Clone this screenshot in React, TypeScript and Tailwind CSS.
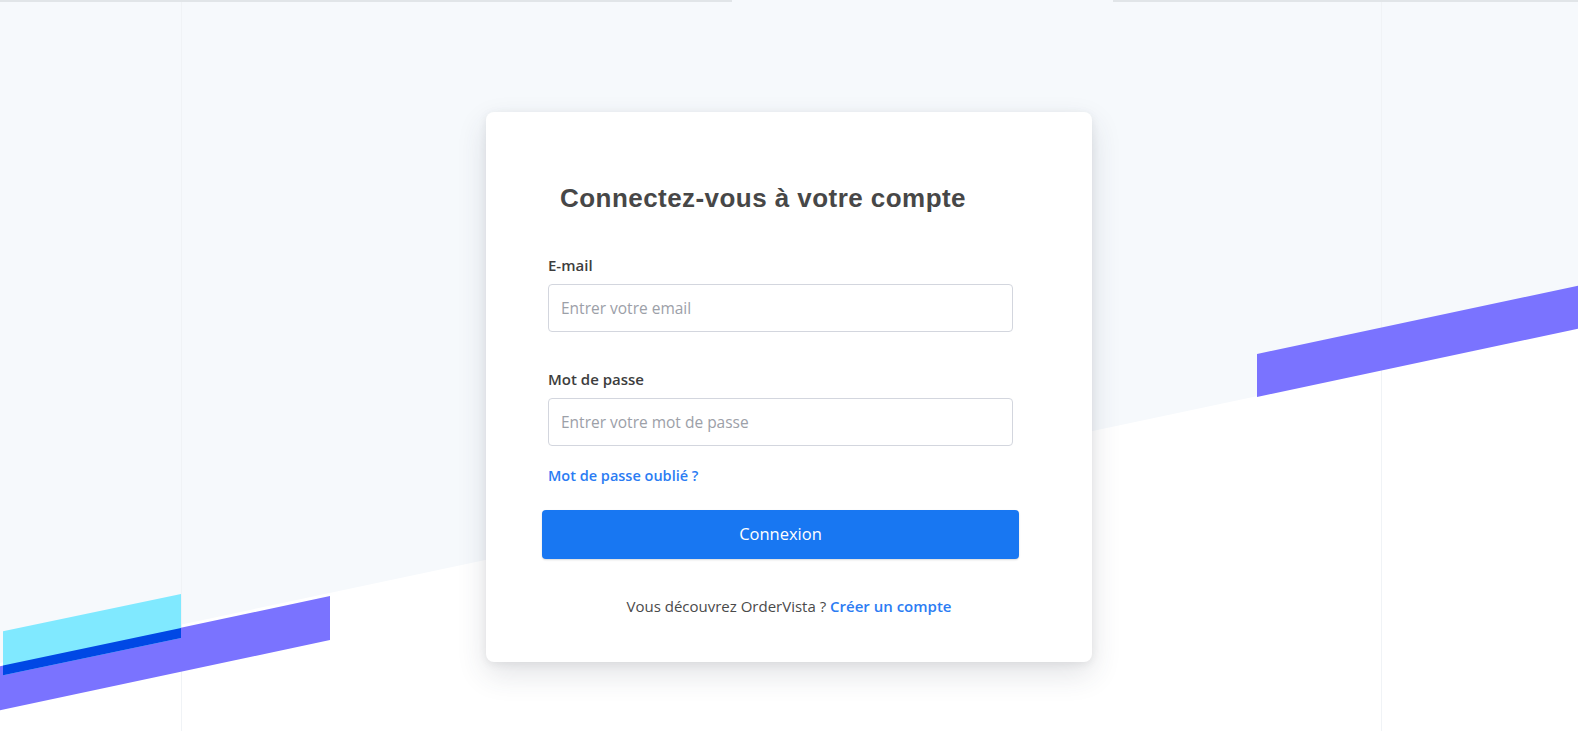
import React from 'react';

function Background() {
  return (
    <svg
      className="absolute inset-0 pointer-events-none"
      width="1578"
      height="731"
      viewBox="0 0 1578 731"
    >
      <polygon points="0,0 1578,0 1578,328 0,663" fill="#f6f9fc" />
      <line x1="181.5" y1="0" x2="181.5" y2="731" stroke="#f0f3f6" strokeWidth="1" />
      <line x1="1381.5" y1="0" x2="1381.5" y2="731" stroke="#f0f3f6" strokeWidth="1" />
      <polygon points="1257,354 1578,285.8 1578,328.8 1257,397" fill="#7a73ff" />
      <polygon points="0,666.2 330,596 330,640 0,710.2" fill="#7a73ff" />
      <polygon points="3,631.2 181,594 181,638 3,675.2" fill="#80e9ff" />
      <polygon points="3,665.6 181,628 181,638 3,675.2" fill="#0048e5" />
      <rect x="0" y="0" width="732" height="2" fill="#e1e5e8" />
      <rect x="1113" y="0" width="465" height="2" fill="#e1e5e8" />
    </svg>
  );
}

function Field({ label, placeholder, type }: { label: string; placeholder: string; type: string }) {
  return (
    <div>
      <label className="block text-[15px] leading-[20px] font-semibold text-[#3d3d3d] mb-[9px]">
        {label}
      </label>
      <input
        type={type}
        placeholder={placeholder}
        className="block w-full h-[48px] px-[12px] rounded-[4px] border border-[#d3d6de] bg-white text-[15.5px] text-[#333] placeholder:text-[#9ca0a8] outline-none"
      />
    </div>
  );
}

export default function App() {
  return (
    <div className="relative w-full h-[731px] overflow-hidden bg-white font-['Open_Sans',sans-serif]">
      <Background />

      <div className="relative flex justify-center pt-[112px]">
        <div className="w-[606px] bg-white rounded-[8px] shadow-[0_12px_30px_rgba(50,60,80,0.14),0_2px_10px_rgba(0,0,0,0.07)] pt-[72px] pb-[46px]">
          <div className="ml-[62px] w-[465px]">
            <h1 className="pl-[12px] font-['Liberation_Sans',Arial,sans-serif] text-[26px] leading-[28px] font-bold tracking-[0.45px] text-[#474747]">
              Connectez-vous à votre compte
            </h1>

            <form className="mt-[43px]" onSubmit={(e) => e.preventDefault()}>
              <Field label="E-mail" placeholder="Entrer votre email" type="email" />

              <div className="mt-[37px]">
                <Field label="Mot de passe" placeholder="Entrer votre mot de passe" type="password" />
              </div>

              <a href="#" className="block mt-[20px] text-[14.5px] leading-[20px] font-semibold text-[#2b7cf3]">
                Mot de passe oublié ?
              </a>

              <button
                type="submit"
                className="block -ml-[6px] w-[477px] h-[49px] mt-[24px] rounded-[4px] bg-[#1877f2] text-white text-[16.5px] shadow-[0_1px_2px_rgba(0,0,0,0.15)]"
              >
                Connexion
              </button>
            </form>
          </div>

          <p className="mt-[37px] text-center text-[15px] leading-[20px] text-[#4a4a4a]">
            Vous découvrez OrderVista ?{' '}
            <a href="#" className="font-semibold text-[#2b7cf3]">
              Créer un compte
            </a>
          </p>
        </div>
      </div>
    </div>
  );
}
